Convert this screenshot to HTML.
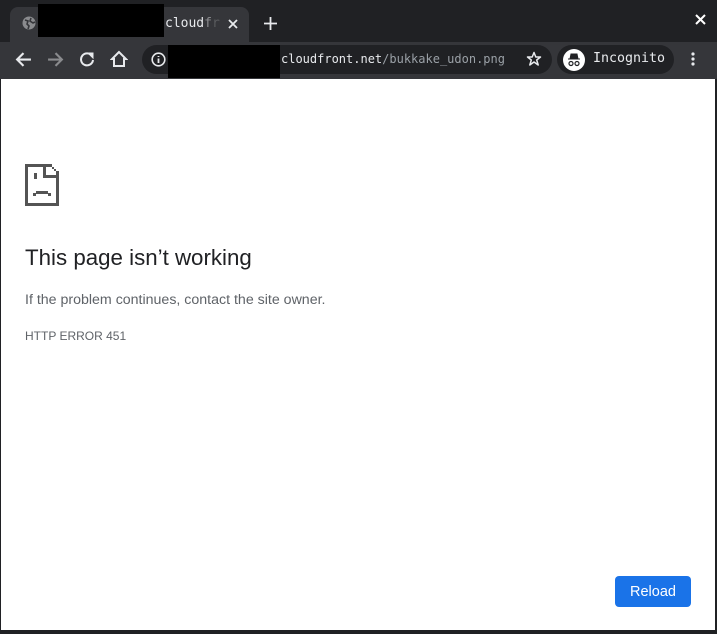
<!DOCTYPE html>
<html><head><meta charset="utf-8"><style>
*{margin:0;padding:0;box-sizing:border-box}
body{width:717px;height:634px;background:#202124;position:relative;overflow:hidden;font-family:"Liberation Sans",Arial,sans-serif}
.abs{position:absolute}
.mono{font-family:"DejaVu Sans Mono","Liberation Mono",monospace;font-size:12px}
</style></head><body>
<!-- tab -->
<div class="abs" style="left:10px;top:7px;width:239px;height:36px;background:#35363a;border-radius:8px 8px 0 0"></div>
<svg class="abs" style="left:22px;top:16px" width="14" height="14" viewBox="0 0 14 14"><circle cx="7" cy="7" r="6.5" fill="#8a8b8e"/><path d="M3 4 L6 5 L5 8 L7 10 L6 13 M9 2 L8 5 L11 7 L13 6" stroke="#35363a" stroke-width="1.6" fill="none"/></svg>
<div class="abs" style="left:38px;top:4px;width:126px;height:33px;background:#000"></div>
<div class="abs mono" style="left:165px;top:16px;color:#e8eaed;font-size:13px">cloud<span style="color:#8a8b8e">f</span><span style="color:#5a5b5e">r</span></div>
<svg class="abs" style="left:228px;top:19px" width="10" height="10" viewBox="0 0 10 10"><path d="M1 1L9 9M9 1L1 9" stroke="#e8eaed" stroke-width="1.8"/></svg>
<svg class="abs" style="left:264px;top:17px" width="13" height="13" viewBox="0 0 13 13"><path d="M6.5 0V13M0 6.5H13" stroke="#e8eaed" stroke-width="1.8"/></svg>
<svg class="abs" style="left:695px;top:14px" width="11" height="11" viewBox="0 0 11 11"><path d="M1 1L10 10M10 1L1 10" stroke="#fff" stroke-width="2"/></svg>
<!-- toolbar -->
<div class="abs" style="left:0;top:42px;width:717px;height:37px;background:#35363a"></div>
<svg class="abs" style="left:15px;top:51px" width="17" height="17" viewBox="0 0 16 16"><path d="M15 8H2M8 2L2 8L8 14" stroke="#e8eaed" stroke-width="2" fill="none"/></svg>
<svg class="abs" style="left:47px;top:51px" width="17" height="17" viewBox="0 0 16 16"><path d="M1 8H14M8 2L14 8L8 14" stroke="#8a8b8e" stroke-width="2" fill="none"/></svg>
<svg class="abs" style="left:79px;top:51px" width="16" height="16" viewBox="0 0 16 16"><path d="M13 5A6 6 0 1 0 14 9" stroke="#e8eaed" stroke-width="2" fill="none"/><path d="M9 2H14V7Z" fill="#e8eaed" stroke="#e8eaed" stroke-width="1"/></svg>
<svg class="abs" style="left:110px;top:50px" width="18" height="18" viewBox="0 0 18 18"><path d="M9 2L2 9H4V16H14V9H16Z" stroke="#e8eaed" stroke-width="2" fill="none" stroke-linejoin="miter"/></svg>
<div class="abs" style="left:142px;top:45px;width:410px;height:29px;background:#202124;border-radius:15px"></div>
<svg class="abs" style="left:151px;top:52px" width="15" height="15" viewBox="0 0 15 15"><circle cx="7.5" cy="7.5" r="6.3" stroke="#e8eaed" stroke-width="1.6" fill="none"/><path d="M7.5 6.5V11M7.5 4V5" stroke="#e8eaed" stroke-width="1.8"/></svg>
<div class="abs" style="left:168px;top:45px;width:112px;height:33px;background:#000"></div>
<div class="abs mono" style="left:281px;top:52px;color:#e8eaed">cloudfront.net<span style="color:#9aa0a6">/bukkake_udon.png</span></div>
<svg class="abs" style="left:526px;top:51px" width="16" height="16" viewBox="0 0 16 16"><path d="M8 1.5L9.8 6H14.5L10.7 9L12.2 14L8 11L3.8 14L5.3 9L1.5 6H6.2Z" stroke="#e8eaed" stroke-width="1.5" fill="none" stroke-linejoin="round"/></svg>
<div class="abs" style="left:557px;top:45px;width:117px;height:29px;background:#202124;border-radius:15px"></div>
<svg class="abs" style="left:563px;top:49px" width="22" height="22" viewBox="0 0 22 22"><circle cx="11" cy="11" r="11" fill="#fff"/><path d="M5 10H17M7 10L8 5H14L15 10" fill="#202124" stroke="#202124" stroke-width="1"/><circle cx="8" cy="14.5" r="2" stroke="#202124" stroke-width="1.2" fill="none"/><circle cx="14" cy="14.5" r="2" stroke="#202124" stroke-width="1.2" fill="none"/></svg>
<div class="abs mono" style="left:593px;top:51px;color:#e8eaed;font-size:13.3px">Incognito</div>
<svg class="abs" style="left:690px;top:51px" width="6" height="16" viewBox="0 0 6 16"><circle cx="3" cy="3" r="1.6" fill="#e8eaed"/><circle cx="3" cy="8" r="1.6" fill="#e8eaed"/><circle cx="3" cy="13" r="1.6" fill="#e8eaed"/></svg>
<!-- page -->
<div class="abs" style="left:1px;top:79px;width:714px;height:551px;background:#fff"></div>
<svg class="abs" style="left:25px;top:164px" width="34" height="42" viewBox="0 0 34 42" shape-rendering="crispEdges" fill="#545454">
<rect x="0" y="0" width="3" height="42"/><rect x="0" y="39" width="34" height="3"/><rect x="31" y="11" width="3" height="31"/><rect x="0" y="0" width="27" height="3"/>
<rect x="27" y="3" width="2" height="2"/><rect x="29" y="5" width="2" height="2"/><rect x="31" y="7" width="3" height="4"/>
<rect x="18" y="0" width="3" height="14"/><rect x="18" y="11" width="16" height="3"/>
<rect x="9" y="9" width="3" height="6"/>
<rect x="11" y="27" width="12" height="3"/><rect x="8" y="29" width="3" height="3"/><rect x="23" y="29" width="3" height="3"/>
</svg>
<div class="abs" style="left:25px;top:245px;font-size:22.3px;color:#202124">This page isn’t working</div>
<div class="abs" style="left:25px;top:292px;font-size:14.2px;color:#5f6368">If the problem continues, contact the site owner.</div>
<div class="abs" style="left:25px;top:329px;font-size:12px;color:#5f6368">HTTP ERROR 451</div>
<div class="abs" style="left:615px;top:576px;width:76px;height:31px;background:#1a73e8;border-radius:4px;color:#fff;font-size:14.5px;text-align:center;line-height:33px">Reload</div>
</body></html>
